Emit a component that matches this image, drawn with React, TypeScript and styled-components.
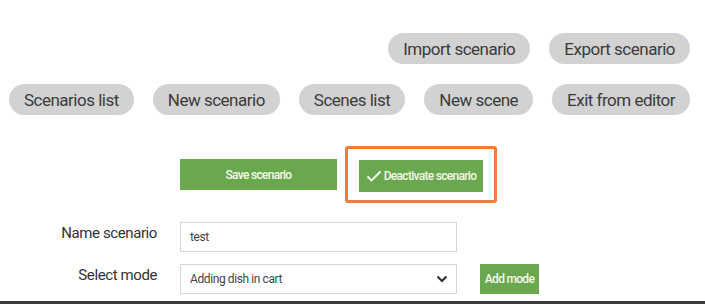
import React from "react";
import styled, { createGlobalStyle } from "styled-components";

const Global = createGlobalStyle`
  html, body { margin: 0; padding: 0; background: #ffffff; }
  body { font-family: "Roboto", "Liberation Sans", sans-serif; }
  * { box-sizing: border-box; }
`;

const Page = styled.div`
  width: 705px;
  height: 304px;
  overflow: hidden;
  display: flex;
  flex-direction: column;
  padding-top: 33px;
  border-bottom: 3px solid #3a3a3a;
`;

const NavArea = styled.div`
  display: flex;
  flex-direction: column;
  gap: 20px;
  padding-right: 15px;
`;

const NavRow = styled.div`
  display: flex;
  justify-content: flex-end;
  gap: 19px;
`;

const Pill = styled.button`
  height: 31px;
  padding: 0 15px;
  border: none;
  border-radius: 16px;
  background: #d2d2d2;
  color: #3b3b3b;
  font-family: "Roboto", sans-serif;
  font-size: 17px;
  letter-spacing: -0.5px;
  cursor: pointer;
`;

const ActionRow = styled.div`
  display: flex;
  align-items: center;
  gap: 8px;
  padding-left: 180px;
  margin-top: 31px;
`;

const GreenButton = styled.button<{ $w: number; $h?: number }>`
  width: ${(p) => p.$w}px;
  height: ${(p) => p.$h ?? 32}px;
  border: none;
  background: #6aa84f;
  color: #f4f8e6;
  font-family: "Roboto", sans-serif;
  font-size: 12px;
  font-weight: 500;
  letter-spacing: -0.7px;
  display: flex;
  align-items: center;
  justify-content: center;
  gap: 2px;
  padding: 0;
  cursor: pointer;
`;

const Highlight = styled.div`
  border: 3px solid #f47b3c;
  border-radius: 3px;
  padding: 11px 11px 8px 11px;
  display: flex;
`;

const Form = styled.div`
  display: grid;
  grid-template-columns: 157px 277px auto;
  column-gap: 23px;
  row-gap: 12px;
  margin-top: 19px;
  align-items: start;
`;

const Label = styled.div`
  text-align: right;
  color: #333333;
  font-family: "Roboto", sans-serif;
  font-size: 15px;
  letter-spacing: -0.4px;
  padding-top: 2px;
`;

const Field = styled.div`
  height: 30px;
  border: 1px solid #d6d6d6;
  display: flex;
  align-items: center;
  justify-content: space-between;
  padding: 0 8px 0 9px;
  color: #444444;
  font-family: "Roboto", sans-serif;
  font-size: 12px;
  letter-spacing: -0.4px;
`;

const Empty = styled.div``;

export default function App() {
  return (
    <>
      <Global />
      <Page>
        <NavArea>
          <NavRow>
            <Pill>Import scenario</Pill>
            <Pill>Export scenario</Pill>
          </NavRow>
          <NavRow>
            <Pill>Scenarios list</Pill>
            <Pill>New scenario</Pill>
            <Pill>Scenes list</Pill>
            <Pill>New scene</Pill>
            <Pill>Exit from editor</Pill>
          </NavRow>
        </NavArea>
        <ActionRow>
          <GreenButton $w={157} $h={31}>Save scenario</GreenButton>
          <Highlight>
            <GreenButton $w={124}>
              <svg width="16" height="12" viewBox="0 0 16 12">
                <polyline points="1.5,6.5 5.5,10.5 14.5,1.5" fill="none" stroke="#ffffff" strokeWidth="1.8" />
              </svg>
              Deactivate scenario
            </GreenButton>
          </Highlight>
        </ActionRow>
        <Form>
          <Label>Name scenario</Label>
          <Field>test</Field>
          <Empty />
          <Label>Select mode</Label>
          <Field>
            Adding dish in cart
            <svg width="12" height="8" viewBox="0 0 12 8">
              <polyline points="1.5,1.5 6,6 10.5,1.5" fill="none" stroke="#333" strokeWidth="2.2" />
            </svg>
          </Field>
          <GreenButton $w={59} $h={30}>Add mode</GreenButton>
        </Form>
      </Page>
    </>
  );
}
